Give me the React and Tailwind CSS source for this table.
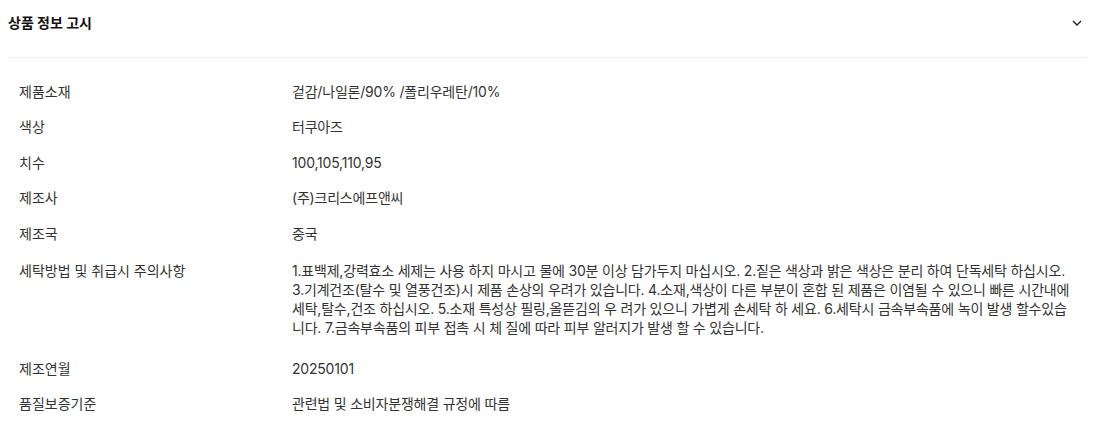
import React from "react";

const rows = [
  { label: "제품소재", value: "겉감/나일론/90% /폴리우레탄/10%" },
  { label: "색상", value: "터쿠아즈" },
  { label: "치수", value: "100,105,110,95" },
  { label: "제조사", value: "(주)크리스에프앤씨" },
  { label: "제조국", value: "중국" },
];

// 세탁방법: wrapped the same way the page wraps it
const washLines = [
  "1.표백제,강력효소 세제는 사용 하지 마시고 물에 30분 이상 담가두지 마십시오. 2.짙은 색상과 밝은 색상은 분리 하여 단독세탁 하십시오.",
  "3.기계건조(탈수 및 열풍건조)시 제품 손상의 우려가 있습니다. 4.소재,색상이 다른 부분이 혼합 된 제품은 이염될 수 있으니 빠른 시간내에",
  "세탁,탈수,건조 하십시오. 5.소재 특성상 필링,올뜯김의 우 려가 있으니 가볍게 손세탁 하 세요. 6.세탁시 금속부속품에 녹이 발생 할수있습",
  "니다. 7.금속부속품의 피부 접촉 시 체 질에 따라 피부 알러지가 발생 할 수 있습니다.",
];

const tail = [
  { label: "제조연월", value: "20250101" },
  { label: "품질보증기준", value: "관련법 및 소비자분쟁해결 규정에 따름" },
];

const Row = ({ label, value }) => (
  <div className="flex py-[8.25px] text-[14px] leading-[19px] text-[#333]">
    <div className="w-[273px] shrink-0">{label}</div>
    <div className="flex-1 tracking-[-0.2px]">{value}</div>
  </div>
);

export default function App() {
  return (
    <div className="w-full bg-white px-2 font-['Inter','Noto_Sans_CJK_KR',sans-serif]">
      {/* Header */}
      <div className="flex items-center justify-between pt-[13px] pb-[24px] border-b border-[#ededed]">
        <h2 className="text-[14px] leading-5 font-bold text-[#111]">상품 정보 고시</h2>
        <svg width="10" height="6" viewBox="0 0 10 6" className="mr-[5px]" fill="none">
          <path d="M1 1l4 4 4-4" stroke="#222" strokeWidth="1.4" />
        </svg>
      </div>

      {/* Table */}
      <div className="pt-[15.5px] pl-[11px]">
        {rows.map((r) => (
          <Row key={r.label} {...r} />
        ))}
        <div className="flex pt-[9.75px] pb-[13.75px] text-[14px] leading-[19px] text-[#333]">
          <div className="w-[273px] shrink-0">세탁방법 및 취급시 주의사항</div>
          <div className="flex-1 tracking-[-0.2px]">
            {washLines.map((l, i) => (
              <div key={i} className="whitespace-nowrap">
                {l}
              </div>
            ))}
          </div>
        </div>
        {tail.map((r) => (
          <Row key={r.label} {...r} />
        ))}
      </div>
    </div>
  );
}
